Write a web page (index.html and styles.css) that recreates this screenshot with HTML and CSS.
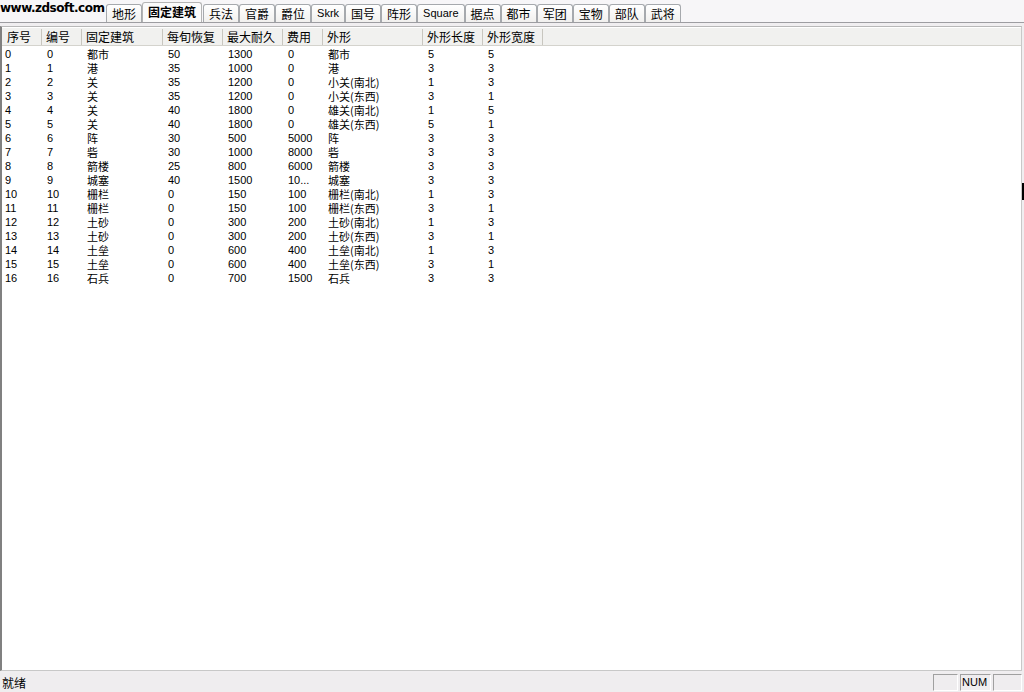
FILE: index.html
```html
<!DOCTYPE html>
<html>
<head>
<meta charset="utf-8">
<link rel="stylesheet" href="styles.css">
</head>
<body>
<div class="app">
  <div class="tabbar">
    <div class="brand">www.zdsoft.com</div>
    <div class="tabs">
      <div class="tab">地形</div>
      <div class="tab active">固定建筑</div>
      <div class="tab">兵法</div>
      <div class="tab">官爵</div>
      <div class="tab">爵位</div>
      <div class="tab latin">Skrk</div>
      <div class="tab">国号</div>
      <div class="tab">阵形</div>
      <div class="tab latin">Square</div>
      <div class="tab">据点</div>
      <div class="tab">都市</div>
      <div class="tab">军团</div>
      <div class="tab">宝物</div>
      <div class="tab">部队</div>
      <div class="tab">武将</div>
    </div>
  </div>
  <div class="panel">
    <div class="list">
      <div class="row head">
        <div class="c c1">序号</div><div class="c c2">编号</div><div class="c c3">固定建筑</div><div class="c c4">每旬恢复</div><div class="c c5">最大耐久</div><div class="c c6">费用</div><div class="c c7">外形</div><div class="c c8">外形长度</div><div class="c c9">外形宽度</div>
      </div>
      <div class="row"><div class="c c1">0</div><div class="c c2">0</div><div class="c c3">都市</div><div class="c c4">50</div><div class="c c5">1300</div><div class="c c6">0</div><div class="c c7">都市</div><div class="c c8">5</div><div class="c c9">5</div></div>
      <div class="row"><div class="c c1">1</div><div class="c c2">1</div><div class="c c3">港</div><div class="c c4">35</div><div class="c c5">1000</div><div class="c c6">0</div><div class="c c7">港</div><div class="c c8">3</div><div class="c c9">3</div></div>
      <div class="row"><div class="c c1">2</div><div class="c c2">2</div><div class="c c3">关</div><div class="c c4">35</div><div class="c c5">1200</div><div class="c c6">0</div><div class="c c7">小关(南北)</div><div class="c c8">1</div><div class="c c9">3</div></div>
      <div class="row"><div class="c c1">3</div><div class="c c2">3</div><div class="c c3">关</div><div class="c c4">35</div><div class="c c5">1200</div><div class="c c6">0</div><div class="c c7">小关(东西)</div><div class="c c8">3</div><div class="c c9">1</div></div>
      <div class="row"><div class="c c1">4</div><div class="c c2">4</div><div class="c c3">关</div><div class="c c4">40</div><div class="c c5">1800</div><div class="c c6">0</div><div class="c c7">雄关(南北)</div><div class="c c8">1</div><div class="c c9">5</div></div>
      <div class="row"><div class="c c1">5</div><div class="c c2">5</div><div class="c c3">关</div><div class="c c4">40</div><div class="c c5">1800</div><div class="c c6">0</div><div class="c c7">雄关(东西)</div><div class="c c8">5</div><div class="c c9">1</div></div>
      <div class="row"><div class="c c1">6</div><div class="c c2">6</div><div class="c c3">阵</div><div class="c c4">30</div><div class="c c5">500</div><div class="c c6">5000</div><div class="c c7">阵</div><div class="c c8">3</div><div class="c c9">3</div></div>
      <div class="row"><div class="c c1">7</div><div class="c c2">7</div><div class="c c3">砦</div><div class="c c4">30</div><div class="c c5">1000</div><div class="c c6">8000</div><div class="c c7">砦</div><div class="c c8">3</div><div class="c c9">3</div></div>
      <div class="row"><div class="c c1">8</div><div class="c c2">8</div><div class="c c3">箭楼</div><div class="c c4">25</div><div class="c c5">800</div><div class="c c6">6000</div><div class="c c7">箭楼</div><div class="c c8">3</div><div class="c c9">3</div></div>
      <div class="row"><div class="c c1">9</div><div class="c c2">9</div><div class="c c3">城塞</div><div class="c c4">40</div><div class="c c5">1500</div><div class="c c6">10...</div><div class="c c7">城塞</div><div class="c c8">3</div><div class="c c9">3</div></div>
      <div class="row"><div class="c c1">10</div><div class="c c2">10</div><div class="c c3">栅栏</div><div class="c c4">0</div><div class="c c5">150</div><div class="c c6">100</div><div class="c c7">栅栏(南北)</div><div class="c c8">1</div><div class="c c9">3</div></div>
      <div class="row"><div class="c c1">11</div><div class="c c2">11</div><div class="c c3">栅栏</div><div class="c c4">0</div><div class="c c5">150</div><div class="c c6">100</div><div class="c c7">栅栏(东西)</div><div class="c c8">3</div><div class="c c9">1</div></div>
      <div class="row"><div class="c c1">12</div><div class="c c2">12</div><div class="c c3">土砂</div><div class="c c4">0</div><div class="c c5">300</div><div class="c c6">200</div><div class="c c7">土砂(南北)</div><div class="c c8">1</div><div class="c c9">3</div></div>
      <div class="row"><div class="c c1">13</div><div class="c c2">13</div><div class="c c3">土砂</div><div class="c c4">0</div><div class="c c5">300</div><div class="c c6">200</div><div class="c c7">土砂(东西)</div><div class="c c8">3</div><div class="c c9">1</div></div>
      <div class="row"><div class="c c1">14</div><div class="c c2">14</div><div class="c c3">土垒</div><div class="c c4">0</div><div class="c c5">600</div><div class="c c6">400</div><div class="c c7">土垒(南北)</div><div class="c c8">1</div><div class="c c9">3</div></div>
      <div class="row"><div class="c c1">15</div><div class="c c2">15</div><div class="c c3">土垒</div><div class="c c4">0</div><div class="c c5">600</div><div class="c c6">400</div><div class="c c7">土垒(东西)</div><div class="c c8">3</div><div class="c c9">1</div></div>
      <div class="row"><div class="c c1">16</div><div class="c c2">16</div><div class="c c3">石兵</div><div class="c c4">0</div><div class="c c5">700</div><div class="c c6">1500</div><div class="c c7">石兵</div><div class="c c8">3</div><div class="c c9">3</div></div>
    </div>
    <div class="edge-mark"></div>
  </div>
  <div class="status">
    <div class="status-text">就绪</div>
    <div class="pane p1"></div>
    <div class="pane p2">NUM</div>
    <div class="pane p3"></div>
  </div>
</div>
</body>
</html>
```
FILE: styles.css
```css
* { box-sizing: border-box; }
html, body { margin: 0; padding: 0; }
body {
  width: 1024px;
  height: 692px;
  overflow: hidden;
  background: #f0eef0;
  font-family: "Liberation Sans", "Noto Sans CJK SC", sans-serif;
  font-size: 11px;
  color: #000;
}
.app {
  display: flex;
  flex-direction: column;
  height: 692px;
}
.tabbar {
  position: relative;
  height: 23px;
  background: #f7f6f8;
  border-bottom: 1px solid #9d9da1;
  flex: none;
}
.brand {
  position: absolute;
  left: 0;
  top: 0;
  font-family: "DejaVu Sans", "Liberation Sans", sans-serif;
  font-weight: bold;
  font-size: 12px;
  letter-spacing: -0.5px;
  line-height: 16px;
  color: #000;
  z-index: 2;
}
.tabs {
  display: flex;
  padding-left: 106px;
  height: 22px;
  align-items: flex-end;
}
.tab {
  height: 18px;
  padding: 0 5px;
  border: 1px solid #a6a9ad;
  border-bottom: none;
  border-radius: 3px 3px 0 0;
  background: linear-gradient(#ffffff, #f1f0ee);
  font-family: "Noto Sans CJK SC", sans-serif;
  font-size: 12px;
  line-height: 17px;
  white-space: nowrap;
}
.tab.latin {
  font-family: "Liberation Sans", sans-serif;
  font-size: 11px;
}
.tab.active {
  height: 20px;
  font-weight: bold;
  background: #fbfbfb;
  border-color: #b4b4b4;
  line-height: 18px;
  margin: 0 1px 0 0;
}
.panel {
  position: relative;
  flex: 1;
  margin: 3px 2px 2px 0;
  background: #fff;
  border-left: 2px solid #808080;
  border-top: 1px solid #b8b8b8;
  border-right: 1px solid #c8c8c8;
  border-bottom: 1px solid #c8c8c8;
  padding-top: 1px;
}
.list {
  display: flex;
  flex-direction: column;
}
.row {
  display: grid;
  grid-template-columns: 40px 40px 81px 60px 60px 40px 100px 60px 60px;
  height: 14px;
  line-height: 14px;
}
.row .c {
  padding-left: 5px;
  white-space: nowrap;
  font-family: "Liberation Sans", "Noto Sans CJK SC", sans-serif;
  height: 14px;
}
.row .c.c1 { padding-left: 3px; }
.row .c.c3, .row .c.c7 { font-family: "Noto Sans CJK SC", sans-serif; font-size: 11px; line-height: 14px; }
.row.head {
  height: 18px;
  background: #f1f1ef;
  border-bottom: 1px solid #d4d3cd;
  margin-bottom: 1px;
  width: 1019px;
}
.row.head .c {
  font-family: "Noto Sans CJK SC", sans-serif;
  font-size: 12px;
  border-right: 1px solid #c8c6bf;
  height: 16px;
  margin-top: 1px;
  line-height: 16px;
  padding-left: 4px;
}
.row.head .c.c1 { padding-left: 5px; }
.edge-mark {
  position: absolute;
  right: -3px;
  top: 156px;
  width: 2px;
  height: 17px;
  background: #000;
}
.status {
  flex: none;
  height: 19px;
  display: flex;
  align-items: center;
  background: #efedef;
  padding-right: 2px;
}
.status-text {
  flex: 1;
  padding-left: 2px;
  font-family: "Noto Sans CJK SC", sans-serif;
  font-size: 12px;
}
.pane {
  height: 17px;
  border: 1px solid;
  border-color: #a0a0a0 #ffffff #ffffff #a0a0a0;
  margin-left: 2px;
  font-size: 11px;
  line-height: 15px;
  padding-left: 1px;
}
.p1 { width: 25px; }
.p2 { width: 31px; }
.p3 { width: 29px; }
```
